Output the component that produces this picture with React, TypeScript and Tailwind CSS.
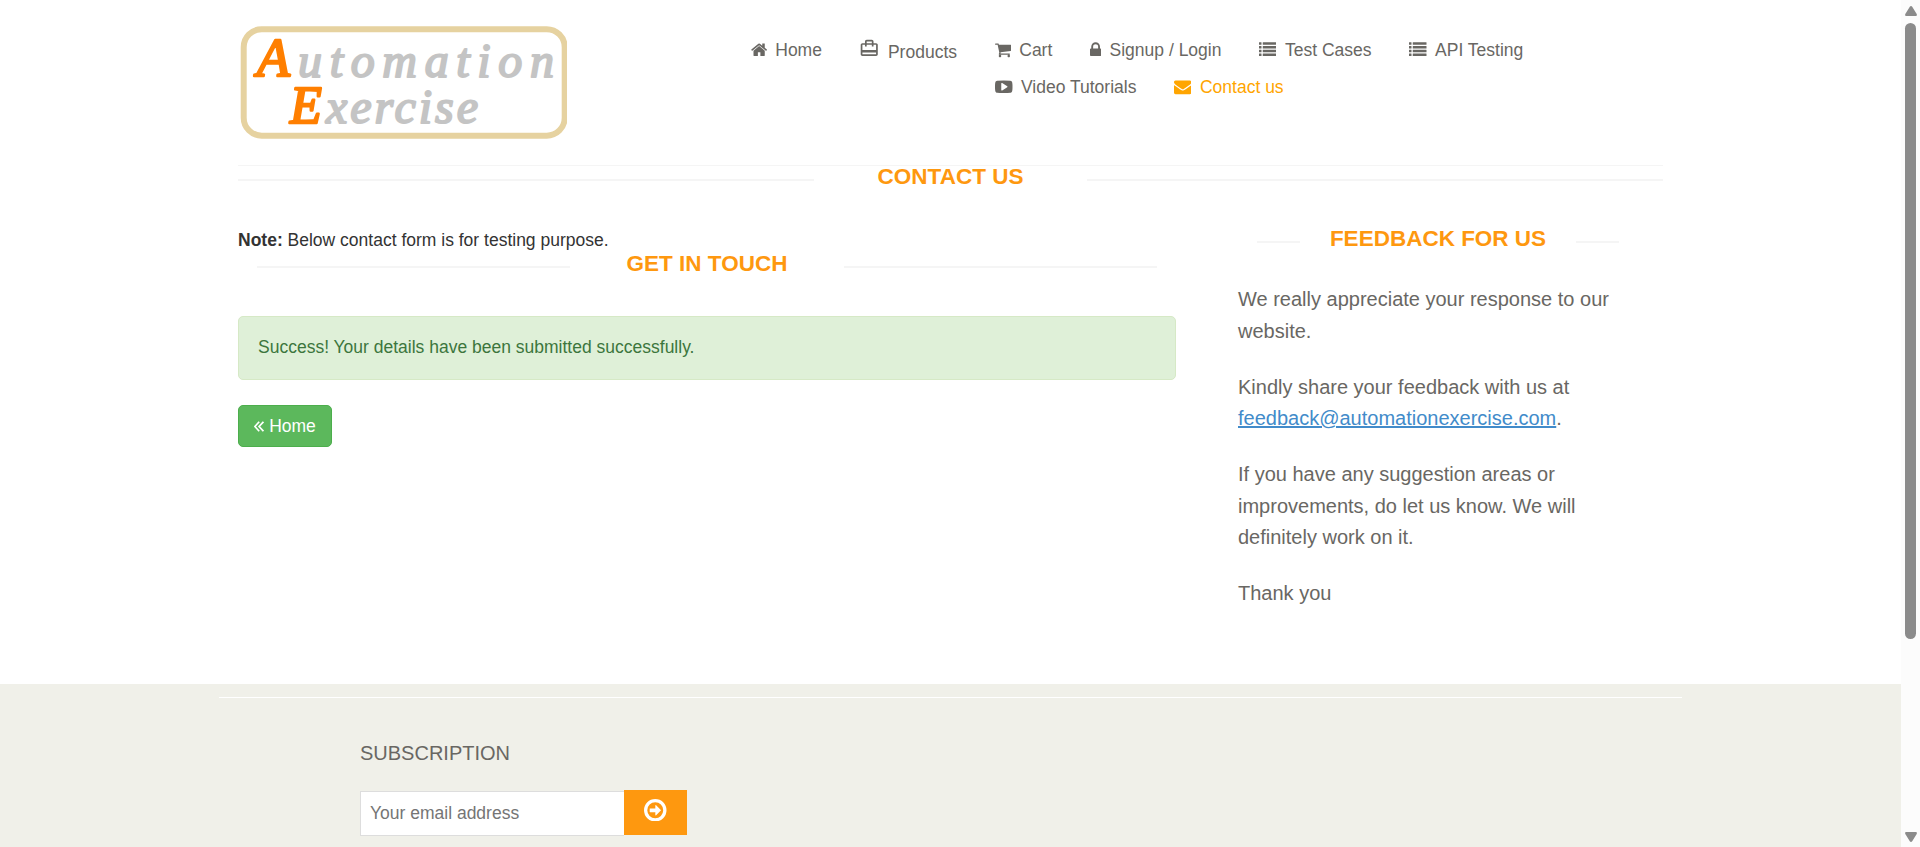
import React from "react";
import { MdCardTravel } from "react-icons/md";

type IconProps = { box: string; w: string; children: React.ReactNode };

function Glyph({ box, w, children }: IconProps) {
  return (
    <svg viewBox={box} className={`${w} h-[17.5px] shrink-0 fill-current`}>
      {children}
    </svg>
  );
}

const HomeIcon = () => (
  <Glyph box="64 0 1664 1792" w="w-[16.25px]">
    <path d="M1472 992v480q0 26-19 45t-45 19h-384v-384h-256v384h-384q-26 0-45-19t-19-45v-480q0-1 .5-3t.5-3l575-474 575 474q1 2 1 6zm223-69l-62 74q-8 9-21 11h-3q-13 0-21-7l-692-577-692 577q-12 8-24 7-13-2-21-11l-62-74q-8-10-7-23.5t11-21.5l719-599q32-26 76-26t76 26l244 204v-195q0-14 9-23t23-9h192q14 0 23 9t9 23v408l219 182q10 8 11 21.5t-7 23.5z" />
  </Glyph>
);

const CartIcon = () => (
  <Glyph box="64 0 1664 1792" w="w-[16.25px]">
    <path d="M704 1536q0 52-38 90t-90 38-90-38-38-90 38-90 90-38 90 38 38 90zm896 0q0 52-38 90t-90 38-90-38-38-90 38-90 90-38 90 38 38 90zm128-1088v512q0 24-16.5 42.5t-40.5 21.5l-1044 122q13 60 13 70 0 16-24 64h920q26 0 45 19t19 45-19 45-45 19h-1024q-26 0-45-19t-19-45q0-11 8-31.5t16-36 21.5-40 15.5-29.5l-177-823h-204q-26 0-45-19t-19-45 19-45 45-19h256q16 0 28.5 6.5t19.5 15.5 13 24.5 8 26 5.5 29.5 4.5 26h1201q26 0 45 19t19 45z" />
  </Glyph>
);

const LockIcon = () => (
  <Glyph box="320 0 1152 1792" w="w-[11.25px]">
    <path d="M640 768h512v-192q0-106-75-181t-181-75-181 75-75 181v192zm832 96v576q0 40-28 68t-68 28h-960q-40 0-68-28t-28-68v-576q0-40 28-68t68-28h32v-192q0-184 132-316t316-132 316 132 132 316v192h32q40 0 68 28t28 68z" />
  </Glyph>
);

const ListIcon = () => (
  <Glyph box="0 0 1792 1792" w="w-[17.5px]">
    {[128, 512, 896, 1280].map((y) => (
      <React.Fragment key={y}>
        <rect x="0" y={y} width="256" height="256" rx="32" />
        <rect x="384" y={y} width="1408" height="256" rx="32" />
      </React.Fragment>
    ))}
  </Glyph>
);

const VideoIcon = () => (
  <Glyph box="0 0 1792 1792" w="w-[17.5px]">
    <path d="M1280 896q0-37-30-54l-512-320q-31-20-65-2-33 18-33 56v640q0 38 33 56 16 8 31 8 20 0 34-10l512-320q30-17 30-54zm512 0q0 96-1 150t-8.5 136.5-22.5 147.5q-16 73-69 123t-124 58q-222 25-671 25t-671-25q-71-8-124.5-58t-69.5-123q-14-65-21.5-147.5t-8.5-136.5-1-150 1-150 8.5-136.5 22.5-147.5q16-73 69-123t124-58q222-25 671-25t671 25q71 8 124.5 58t69.5 123q14 65 21.5 147.5t8.5 136.5 1 150z" />
  </Glyph>
);

const MailIcon = () => (
  <Glyph box="0 0 1792 1792" w="w-[17.5px]">
    <path d="M1792 710v794q0 66-47 113t-113 47h-1472q-66 0-113-47t-47-113v-794q44 49 101 87 362 246 497 345 57 42 92.5 65.5t94.5 48 110 24.5h2q51 0 110-24.5t94.5-48 92.5-65.5q170-123 498-345 57-39 100-87zm0-294q0 79-49 151t-122 123q-376 261-468 325-10 7-42.5 31t-54 38.5-52 32.5-57.5 27-50 9h-2q-23 0-50-9t-57.5-27-52-32.5-54-38.5-42.5-31q-91-64-262-182.5t-205-142.5q-62-42-117-115.5t-55-136.5q0-78 41.5-130t118.5-52h1472q65 0 112.5 47t47.5 113z" />
  </Glyph>
);

function NavItem({ icon, label, active }: { icon: React.ReactNode; label: string; active?: boolean }) {
  return (
    <a className={`flex h-[25px] items-center gap-[8.5px] whitespace-nowrap ${active ? "text-[#ffa500]" : "text-[#696763]"}`}>
      {icon}
      <span>{label}</span>
    </a>
  );
}

function Logo() {
  return (
    <svg viewBox="0 0 329 120" className="h-[120px] w-[329px]">
      <rect x="5.700" y="5.200" width="321" height="106.500" rx="18" fill="none" stroke="#e6d2a0" strokeWidth="6" />
      <g fontFamily="'Liberation Serif', serif" fontStyle="italic" strokeWidth="2" strokeLinejoin="round">
        <text x="19" y="52" fontSize="54" fill="#ff7f00" stroke="#ff7f00" strokeWidth="2.4">A</text>
        <text x="60" y="53" fontSize="48" fill="#c4c4c4" stroke="#c4c4c4" textLength="256" lengthAdjust="spacing">utomation</text>
        <text x="52" y="99" fontSize="52" fill="#ff7f00" stroke="#ff7f00" strokeWidth="2.4">E</text>
        <text x="88" y="99" fontSize="48" fill="#c4c4c4" stroke="#c4c4c4" textLength="152" lengthAdjust="spacing">xercise</text>
      </g>
    </svg>
  );
}

function RuledTitle({ children, gap }: { children: string; gap: string }) {
  return (
    <h2 className={`flex h-[26px] items-center text-[22.5px] leading-[26px] font-bold whitespace-nowrap text-[#fe980f] ${gap}`}>
      <span className="mt-[5px] h-[2px] flex-1 bg-[#f5f5f5]" />
      {children}
      <span className="mt-[5px] h-[2px] flex-1 bg-[#f5f5f5]" />
    </h2>
  );
}

function ScrollTrack() {
  return (
    <div className="flex w-[19px] shrink-0 flex-col items-center bg-[#fcfcfc] pt-[6px] pb-[5px]">
      <svg viewBox="0 0 12 10" className="h-[10px] w-[12px] fill-[#8b8b8b]">
        <path d="M6 0Q6.700 0 7.200.8L11.700 8Q12.300 10 11 10H1Q-.3 10 .3 8L4.800.8Q5.300 0 6 0z" />
      </svg>
      <div className="mt-[7px] h-[616px] w-[11px] rounded-full bg-[#8b8b8b]" />
      <svg viewBox="0 0 12 10" className="mt-auto h-[10px] w-[12px] fill-[#8b8b8b]">
        <path d="M6 10Q6.700 10 7.200 9.200L11.700 2Q12.300 0 11 0H1Q-.3 0 .3 2L4.800 9.200Q5.300 10 6 10z" />
      </svg>
    </div>
  );
}

export default function App() {
  return (
    <div className="flex h-[847px] w-[1920px] overflow-hidden bg-white font-['Liberation_Sans',Arial,sans-serif] text-[17.5px] leading-[25px] text-[#333]">
      <div className="flex w-[1901px] flex-col">
        <div className="h-[684px] pl-[238px]">
          <header className="flex h-[166px] w-[1425px] border-b border-[#f5f5f5]">
            <div className="pt-[24px]">
              <Logo />
            </div>
            <nav className="ml-[183.5px] pt-[37.5px]">
              <div className="flex gap-[37.5px]">
                <NavItem icon={<HomeIcon />} label="Home" />
                <a className="flex h-[25px] gap-[8px] text-[#696763]">
                  <MdCardTravel className="mt-[0.5px] h-[20.5px] w-[20.5px]" />
                  <span className="pt-[2px]">Products</span>
                </a>
                <NavItem icon={<CartIcon />} label="Cart" />
                <NavItem icon={<LockIcon />} label="Signup / Login" />
                <NavItem icon={<ListIcon />} label="Test Cases" />
                <NavItem icon={<ListIcon />} label="API Testing" />
              </div>
              <div className="mt-[12px] flex gap-[37.5px] pl-[244.5px]">
                <NavItem icon={<VideoIcon />} label="Video Tutorials" />
                <NavItem icon={<MailIcon />} label="Contact us" active />
              </div>
            </nav>
          </header>
          <div className="-mt-[2px] w-[1425px]">
            <RuledTitle gap="gap-[64px]">CONTACT US</RuledTitle>
          </div>
          <div className="flex">
            <section className="w-[938px] pt-[38px]">
              <p className="h-[25px]">
                <b>Note:</b> Below contact form is for testing purpose.
              </p>
              <div className="-mt-[2px] px-[19px]">
                <RuledTitle gap="gap-[57px]">GET IN TOUCH</RuledTitle>
              </div>
              <div className="mt-[39px] flex h-[64px] items-center rounded-[5px] border border-[#d6e9c6] bg-[#dff0d8] px-[19px] pb-[2px] text-[#3c763d]">
                Success! Your details have been submitted successfully.
              </div>
              <a className="mt-[25px] flex h-[42px] w-[94px] items-center justify-center gap-[5px] rounded-[5px] border border-[#4cae4c] bg-[#5cb85c] text-white">
                <svg viewBox="0 0 10 11" className="h-[11px] w-[10px] fill-none stroke-current stroke-[1.7]">
                  <path d="M5.200.8L.9 5.500l4.300 4.700M9.400.8L5.100 5.500l4.300 4.700" />
                </svg>
                Home
              </a>
            </section>
            <aside className="ml-[62px] w-[400px] pt-[36px]">
              <div className="ml-[19px] w-[362px]">
                <RuledTitle gap="gap-[30px]">FEEDBACK FOR US</RuledTitle>
              </div>
              <div className="mt-[32.4px] flex flex-col gap-[25px] text-[20px] leading-[31.25px] text-[#696763]">
                <p>We really appreciate your response to our<br />website.</p>
                <p>
                  Kindly share your feedback with us at<br />
                  <a className="text-[#428bca] underline">feedback@automationexercise.com</a>.
                </p>
                <p>If you have any suggestion areas or<br />improvements, do let us know. We will<br />definitely work on it.</p>
                <p>Thank you</p>
              </div>
            </aside>
          </div>
        </div>
        <footer className="h-[163px] bg-[#f0f0e9] pt-[13px]">
          <div className="ml-[219px] h-px w-[1463px] bg-white" />
          <div className="pt-[43px] pl-[360px]">
            <h2 className="h-[25px] text-[20px] leading-[25px] text-[#696763]">SUBSCRIPTION</h2>
            <div className="mt-[24px] flex">
              <div className="mt-[1px] flex h-[45px] w-[264px] items-center border border-r-0 border-[#ddd] bg-white pl-[9px] text-[#757575]">
                Your email address
              </div>
              <button className="flex h-[45px] w-[63px] items-center justify-center bg-[#fe980f] pb-[5px]">
                <svg viewBox="128 128 1536 1536" className="h-[22.500px] w-[22.500px] fill-white">
                  <circle cx="896" cy="896" r="656" fill="none" stroke="#fff" strokeWidth="224" />
                  <path d="M1285 896q0 14-9 23l-320 320q-9 9-23 9-13 0-22.500-9.500t-9.500-22.500v-192h-352q-13 0-22.500-9.500t-9.500-22.500v-192q0-13 9.500-22.500t22.500-9.500h352v-192q0-14 9-23t23-9q12 0 24 10l319 319q9 9 9 23z" />
                </svg>
              </button>
            </div>
          </div>
        </footer>
      </div>
      <ScrollTrack />
    </div>
  );
}
